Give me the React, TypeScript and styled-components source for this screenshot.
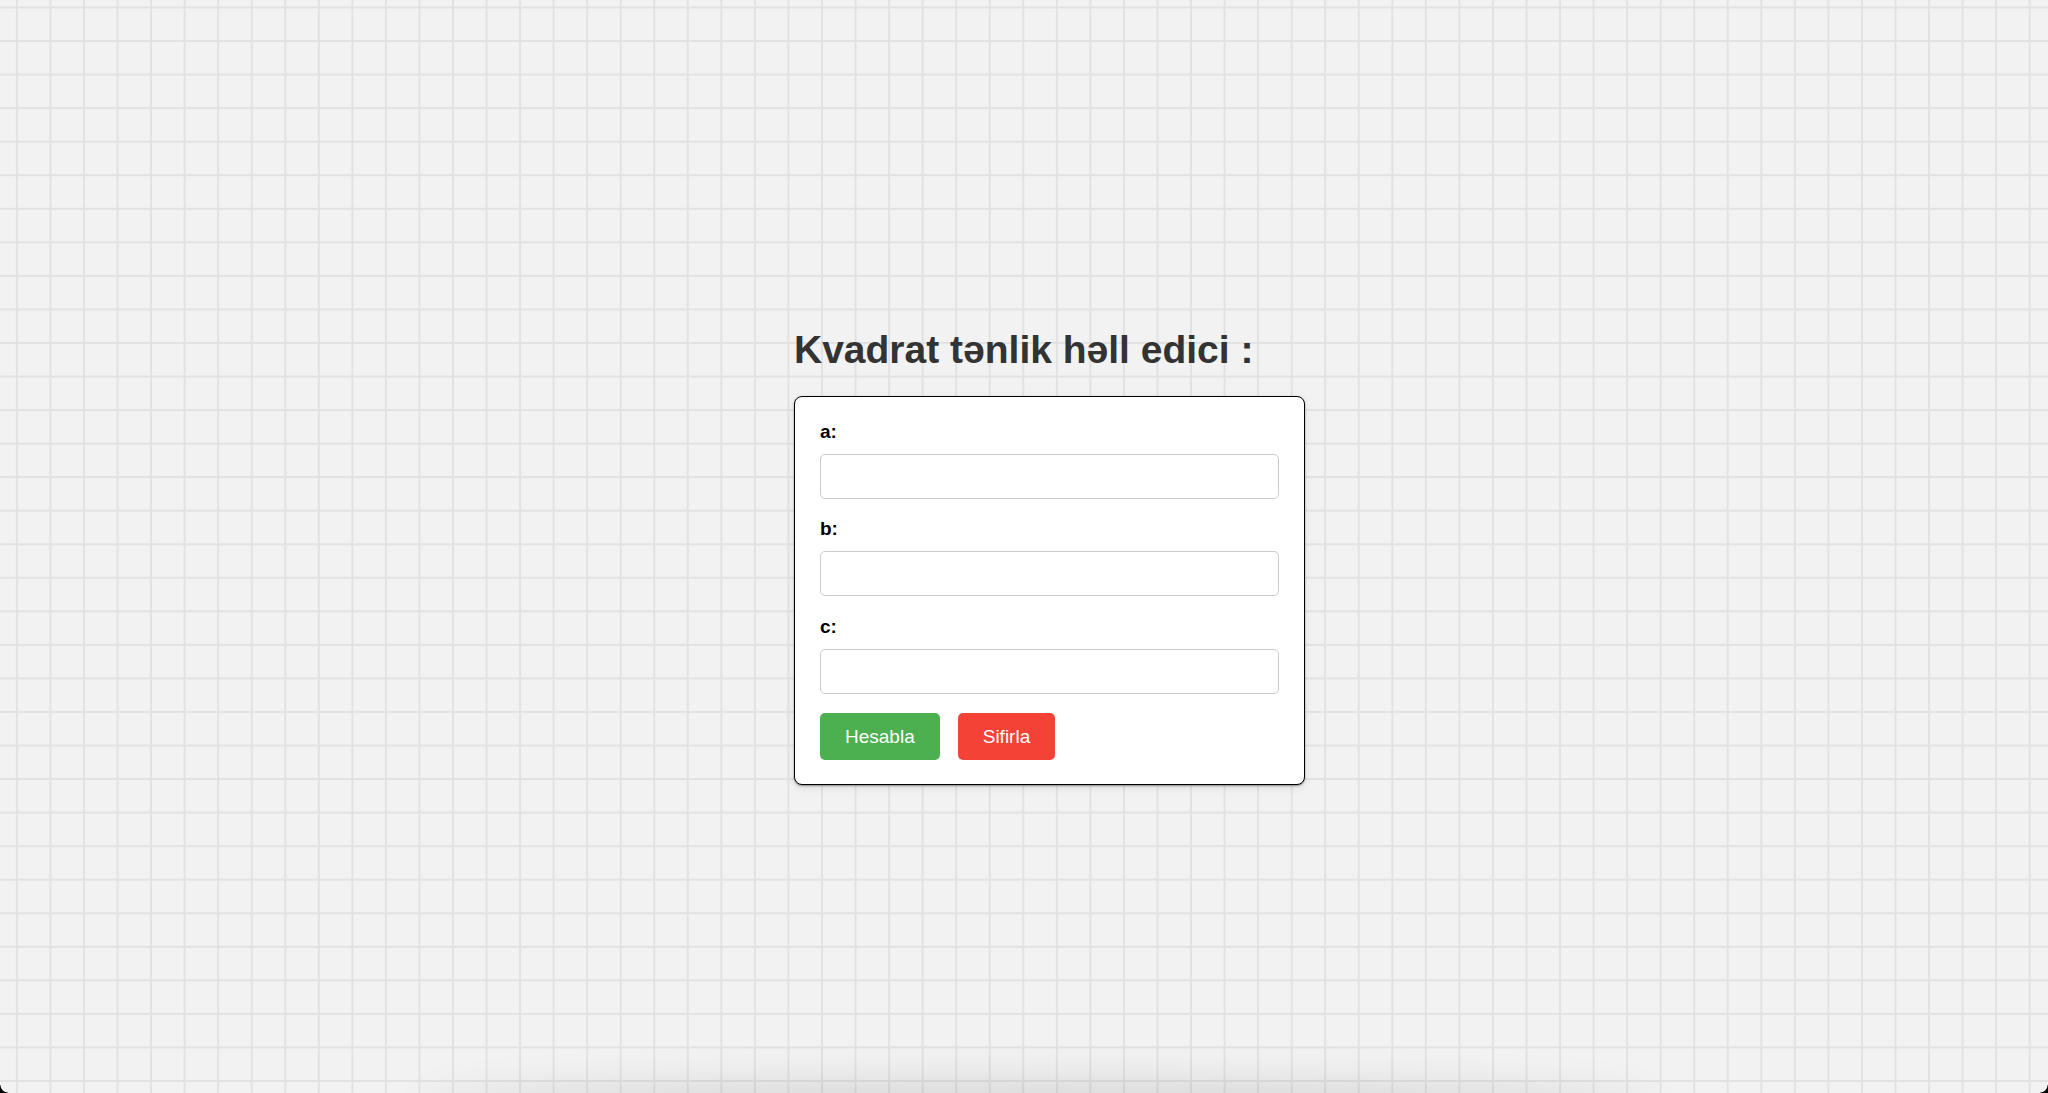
import React from "react";
import styled, { createGlobalStyle } from "styled-components";

const GlobalStyle = createGlobalStyle`
  html, body {
    margin: 0;
    padding: 0;
    height: 100%;
  }
  body {
    font-family: "Liberation Sans", Arial, Helvetica, sans-serif;
    background-color: #f2f2f2;
    background-image:
      linear-gradient(to right, #e2e2e2 1.7px, transparent 1.7px),
      linear-gradient(to bottom, #e2e2e2 1.7px, transparent 1.7px);
    background-size: 33.56px 33.56px;
    background-position: 15.9px 6.5px;
    overflow: hidden;
  }
  #root {
    height: 100%;
  }
`;

const Page = styled.main`
  min-height: 100vh;
  display: flex;
  align-items: center;
  justify-content: center;
  box-sizing: border-box;
`;

const Column = styled.section`
  display: flex;
  flex-direction: column;
  align-items: flex-start;
  margin-left: 51px;
  margin-top: 19px;
`;

const Title = styled.h2`
  margin: 0 0 24px;
  font-size: 39px;
  line-height: 45px;
  font-weight: 700;
  color: #333;
`;

const Card = styled.form`
  box-sizing: border-box;
  width: 511px;
  padding: 24px 25px 24px;
  background: #fff;
  border: 1px solid #000;
  border-radius: 8px;
  box-shadow: 0 1px 2px rgba(0, 0, 0, 0.4), 0 3px 10px rgba(0, 0, 0, 0.08);
  display: flex;
  flex-direction: column;
`;

const Label = styled.label`
  display: block;
  font-size: 19px;
  line-height: 22px;
  font-weight: 700;
  color: #000;
  margin-bottom: 11px;
`;

const Input = styled.input`
  box-sizing: border-box;
  width: 100%;
  height: 45px;
  margin: 0 0 19.5px;
  padding: 0 12px;
  border: 1px solid #cccccc;
  border-radius: 5px;
  background: #fff;
  font-family: inherit;
  font-size: 19px;
  outline: none;
`;

const ButtonRow = styled.div`
  display: flex;
  gap: 18px;
`;

const Button = styled.button<{ $tone: "green" | "red" }>`
  height: 47px;
  padding: 0 25px;
  border: none;
  border-radius: 5px;
  background: ${(p) => (p.$tone === "green" ? "#4caf50" : "#f44336")};
  color: #fff;
  font-family: inherit;
  font-size: 19px;
  cursor: pointer;
`;

const BottomShade = styled.div`
  position: fixed;
  left: 430px;
  right: 400px;
  bottom: -40px;
  height: 40px;
  border-radius: 50%;
  box-shadow: 0 0 45px 8px rgba(0, 0, 0, 0.13);
  pointer-events: none;
`;

const Corner = styled.div<{ $side: "left" | "right" }>`
  position: fixed;
  bottom: 0;
  ${(p) => (p.$side === "left" ? "left: 0;" : "right: 0;")}
  width: 8px;
  height: 8px;
  background: ${(p) =>
    p.$side === "left"
      ? "radial-gradient(circle at 100% 0%, transparent 7px, #000 8px)"
      : "radial-gradient(circle at 0% 0%, transparent 7px, #000 8px)"};
  pointer-events: none;
`;

export default function App() {
  const [a, setA] = React.useState("");
  const [b, setB] = React.useState("");
  const [c, setC] = React.useState("");

  return (
    <>
      <GlobalStyle />
      <Page>
        <Column>
          <Title>Kvadrat tənlik həll edici :</Title>
          <Card onSubmit={(e) => e.preventDefault()}>
            <Label htmlFor="a">a:</Label>
            <Input id="a" type="number" value={a} onChange={(e) => setA(e.target.value)} />
            <Label htmlFor="b">b:</Label>
            <Input id="b" type="number" value={b} onChange={(e) => setB(e.target.value)} />
            <Label htmlFor="c">c:</Label>
            <Input id="c" type="number" value={c} onChange={(e) => setC(e.target.value)} />
            <ButtonRow>
              <Button type="submit" $tone="green">Hesabla</Button>
              <Button
                type="button"
                $tone="red"
                onClick={() => {
                  setA("");
                  setB("");
                  setC("");
                }}
              >
                Sifirla
              </Button>
            </ButtonRow>
          </Card>
        </Column>
      </Page>
      <BottomShade />
      <Corner $side="left" />
      <Corner $side="right" />
    </>
  );
}
